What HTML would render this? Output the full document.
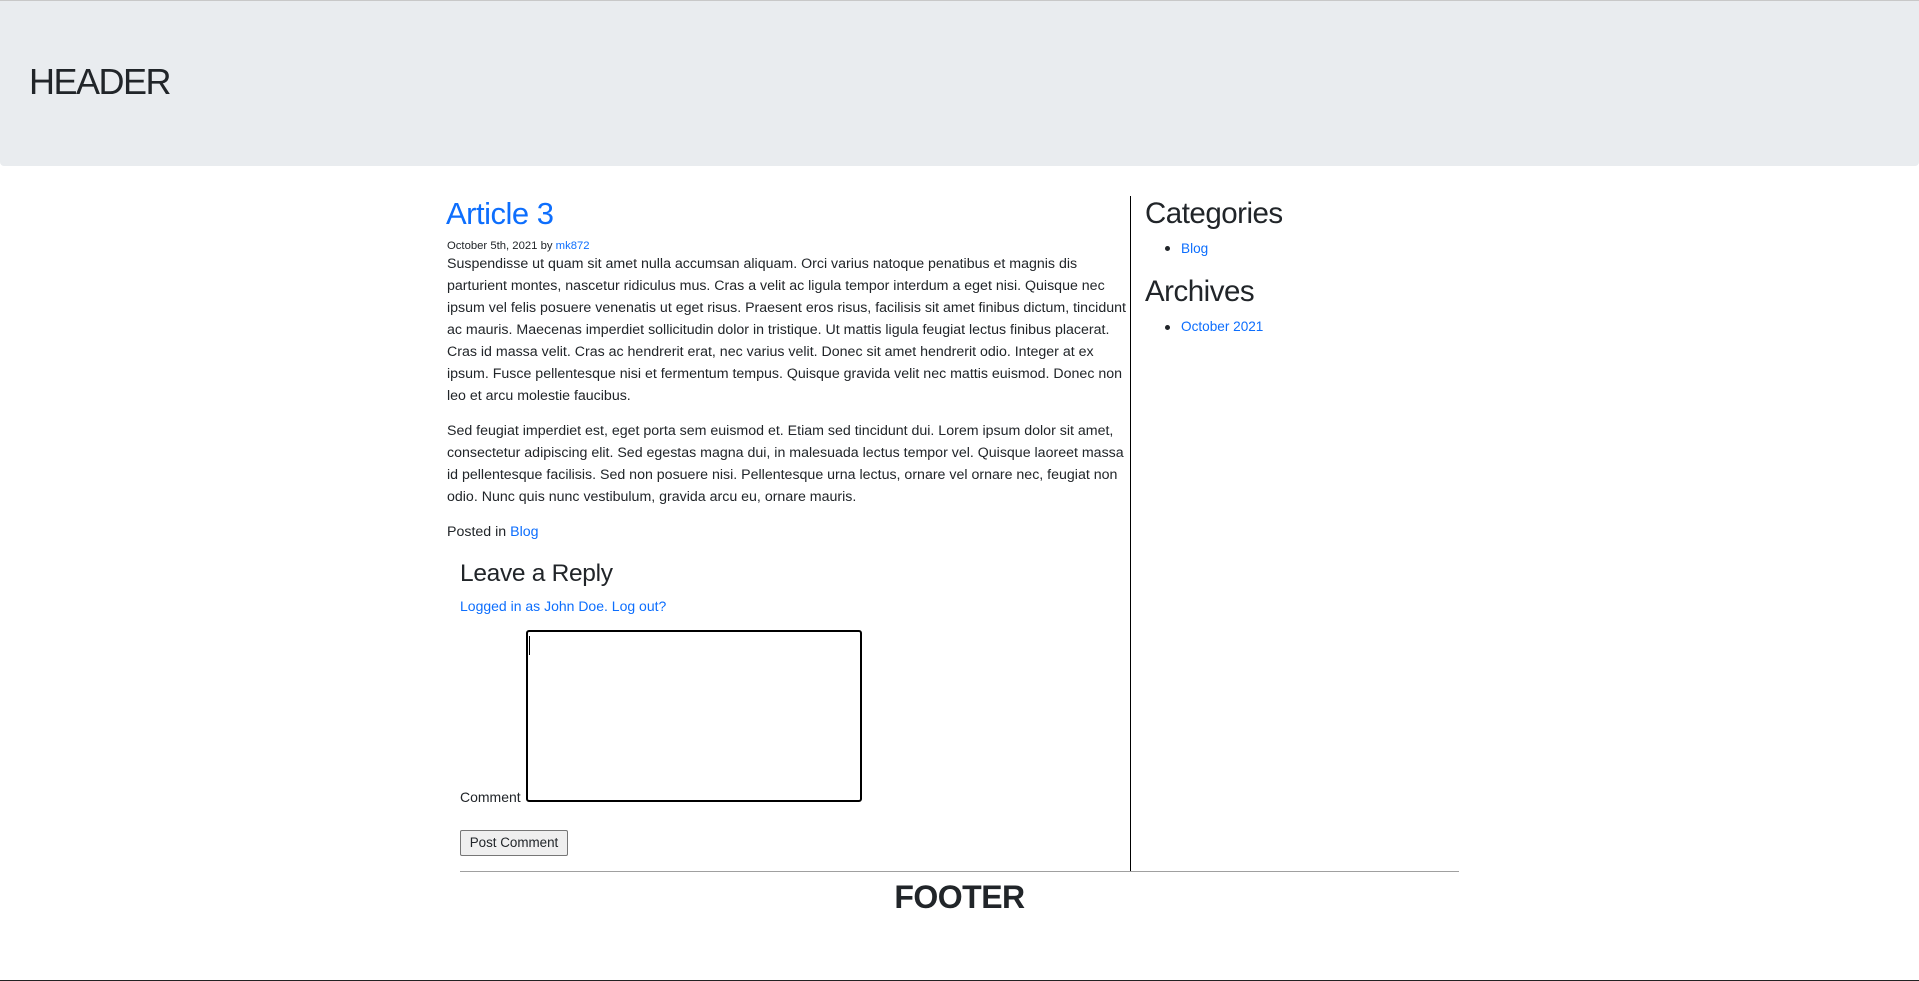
<!DOCTYPE html>
<html><head><meta charset="utf-8"><style>
*{margin:0;padding:0;box-sizing:border-box}
body{width:1919px;height:981px;position:relative;background:#fff;font-family:"Liberation Sans",Arial,sans-serif;color:#212529;overflow:hidden}
.a{position:absolute;white-space:nowrap}
a,.l{color:#0d6efd;text-decoration:none}
#hdr{position:absolute;left:0;top:0;width:1919px;height:166px;background:#e9ecef;border-top:1px solid #c8c8c8;border-radius:0 0 4px 4px}
.p{font-size:14.2px;line-height:22px}
</style></head><body>
<div id="hdr"></div>
<div class="a" style="left:29px;top:59px;font-size:36px;line-height:46px;letter-spacing:-1.5px">HEADER</div>

<div class="a l" style="left:446px;top:194px;font-size:31px;line-height:40px;letter-spacing:-0.5px">Article 3</div>
<div class="a" style="left:447px;top:239px;font-size:11.3px;line-height:14px">October 5th, 2021 by <span class="l">mk872</span></div>
<div class="a p" style="left:447px;top:253px">Suspendisse ut quam sit amet nulla accumsan aliquam. Orci varius natoque penatibus et magnis dis<br>parturient montes, nascetur ridiculus mus. Cras a velit ac ligula tempor interdum a eget nisi. Quisque nec<br>ipsum vel felis posuere venenatis ut eget risus. Praesent eros risus, facilisis sit amet finibus dictum, tincidunt<br>ac mauris. Maecenas imperdiet sollicitudin dolor in tristique. Ut mattis ligula feugiat lectus finibus placerat.<br>Cras id massa velit. Cras ac hendrerit erat, nec varius velit. Donec sit amet hendrerit odio. Integer at ex<br>ipsum. Fusce pellentesque nisi et fermentum tempus. Quisque gravida velit nec mattis euismod. Donec non<br>leo et arcu molestie faucibus.</div>
<div class="a p" style="left:447px;top:420px">Sed feugiat imperdiet est, eget porta sem euismod et. Etiam sed tincidunt dui. Lorem ipsum dolor sit amet,<br>consectetur adipiscing elit. Sed egestas magna dui, in malesuada lectus tempor vel. Quisque laoreet massa<br>id pellentesque facilisis. Sed non posuere nisi. Pellentesque urna lectus, ornare vel ornare nec, feugiat non<br>odio. Nunc quis nunc vestibulum, gravida arcu eu, ornare mauris.</div>
<div class="a p" style="left:447px;top:521px">Posted in <span class="l">Blog</span></div>
<div class="a" style="left:460px;top:558px;font-size:24.5px;line-height:32px;letter-spacing:-0.3px">Leave a Reply</div>
<div class="a l" style="left:460px;top:597px;font-size:14px;line-height:18px">Logged in as John Doe. Log out?</div>
<div class="a" style="left:460px;top:788px;font-size:14px;line-height:18px">Comment</div>
<div class="a" style="left:526px;top:630px;width:336px;height:172px;border:2px solid #000;border-radius:3px"></div>
<div class="a" style="left:529px;top:636px;width:1px;height:19px;background:#000"></div>
<div class="a" style="left:460px;top:830px;width:108px;height:26px;border:1px solid #767676;border-radius:2px;background:#efefef;font-size:13.4px;line-height:24px;text-align:center">Post Comment</div>

<div class="a" style="left:1130px;top:196px;width:1px;height:676px;background:#000"></div>
<div class="a" style="left:1145px;top:194px;font-size:29.5px;line-height:40px;letter-spacing:-0.5px">Categories</div>
<div class="a" style="left:1165px;top:246px;width:5px;height:5px;border-radius:50%;background:#212529"></div>
<div class="a l" style="left:1181px;top:240px;font-size:13.6px;line-height:18px">Blog</div>
<div class="a" style="left:1145px;top:272px;font-size:29.5px;line-height:40px;letter-spacing:-0.5px">Archives</div>
<div class="a" style="left:1165px;top:325px;width:5px;height:5px;border-radius:50%;background:#212529"></div>
<div class="a l" style="left:1181px;top:318px;font-size:13.6px;line-height:18px">October 2021</div>

<div class="a" style="left:460px;top:871px;width:999px;height:1px;background:#a0a0a0"></div>
<div class="a" style="left:0;width:1919px;top:875px;font-size:32px;line-height:44px;text-align:center;font-weight:bold;letter-spacing:-0.5px">FOOTER</div>
<div class="a" style="left:0;top:980px;width:1919px;height:1px;background:#222"></div>
</body></html>
